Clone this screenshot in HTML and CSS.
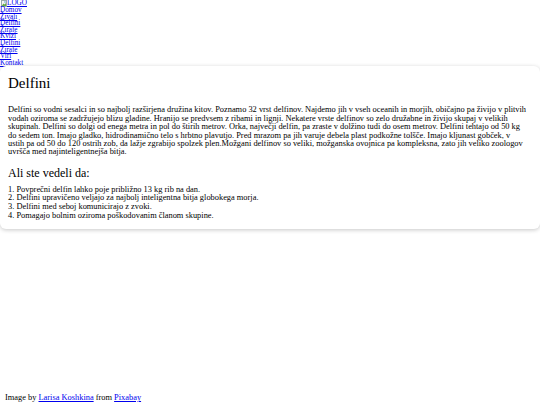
FILE: index.html
```html
<!DOCTYPE html>
<html lang="sl">
<head>
<meta charset="utf-8">
<title>Delfini</title>
<link rel="stylesheet" href="styles.css">
</head>
<body>
<div class="page">
  <nav class="nav">
    <a class="logo" href="#"><svg class="broken" width="6" height="7" viewBox="0 0 6 7"><rect x="0.5" y="0.5" width="5" height="6" fill="#f4f4f4" stroke="#9aa"/><path d="M1 5.5 L2.5 3.5 L3.5 4.5 L5 3 V6 H1Z" fill="#6a4"/><circle cx="4" cy="2" r="0.8" fill="#59c"/></svg>LOGO</a>
    <a href="#">Domov</a>
    <a href="#">Živali</a>
    <a href="#">Delfini</a>
    <a href="#">Žirafe</a>
    <a href="#">Kvizi</a>
    <a href="#">Delfini</a>
    <a href="#">Žirafe</a>
    <a href="#">Viri</a>
    <a href="#">Kontakt</a>
  </nav>
  <main class="card">
    <h1 class="title">Delfini</h1>
    <p class="text">Delfini so vodni sesalci in so najbolj razširjena družina kitov. Poznamo 32 vrst delfinov. Najdemo jih v vseh oceanih in morjih, običajno pa živijo v plitvih vodah oziroma se zadržujejo blizu gladine. Hranijo se predvsem z ribami in lignji. Nekatere vrste delfinov so zelo družabne in živijo skupaj v velikih skupinah. Delfini so dolgi od enega metra in pol do štirih metrov. Orka, največji delfin, pa zraste v dolžino tudi do osem metrov. Delfini tehtajo od 50 kg do sedem ton. Imajo gladko, hidrodinamično telo s hrbtno plavutjo. Pred mrazom pa jih varuje debela plast podkožne tolšče. Imajo kljunast gobček, v ustih pa od 50 do 120 ostrih zob, da lažje zgrabijo spolzek plen.Možgani delfinov so veliki, možganska ovojnica pa kompleksna, zato jih veliko zoologov uvršča med najinteligentnejša bitja.</p>
    <h2 class="subtitle">Ali ste vedeli da:</h2>
    <ol class="facts">
      <li>Povprečni delfin lahko poje približno 13 kg rib na dan.</li>
      <li>Delfini upravičeno veljajo za najbolj inteligentna bitja globokega morja.</li>
      <li>Delfini med seboj komunicirajo z zvoki.</li>
      <li>Pomagajo bolnim oziroma poškodovanim članom skupine.</li>
    </ol>
  </main>
  <footer class="credit">Image by <a href="#">Larisa Koshkina</a> from <a href="#">Pixabay</a></footer>
</div>
</body>
</html>
```
FILE: styles.css
```css
html, body {
  margin: 0;
  padding: 0;
  background: #fff;
}
body {
  font-family: "Liberation Serif", "Times New Roman", serif;
  color: #000;
}
.page {
  display: flex;
  flex-direction: column;
  height: 405px;
}
.nav {
  display: flex;
  flex-direction: column;
  align-items: flex-start;
  font-size: 7.2px;
  line-height: 6.6px;
}
.nav a {
  color: #0000ee;
  text-decoration: underline;
}
.logo {
  display: flex;
  align-items: center;
}
.broken {
  margin: 0 0 0 1px;
}
.card {
  margin-top: 0;
  padding: 1px 12px 8px 8px;
  border-radius: 6px;
  box-shadow: 0 1px 4px rgba(0, 0, 0, 0.22);
  background: #fff;
}
.title {
  font-size: 15px;
  font-weight: normal;
  margin: 7px 0 14px;
  line-height: 18px;
}
.text {
  font-size: 8.4px;
  line-height: 8.4px;
  margin: 0;
}
.subtitle {
  font-size: 12px;
  font-weight: normal;
  margin: 10px 0 6px;
  line-height: 13px;
}
.facts {
  margin: 0;
  padding: 0;
  list-style-position: inside;
  font-size: 8.4px;
  line-height: 8.7px;
}
.credit {
  margin-top: auto;
  padding: 0 0 3px 5px;
  font-size: 8.4px;
  line-height: 9px;
}
.credit a {
  color: #0000ee;
}
```
